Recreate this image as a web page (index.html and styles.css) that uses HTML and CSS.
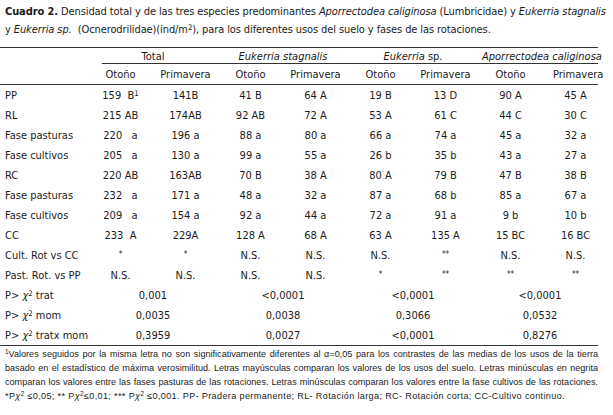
FILE: index.html
```html
<!DOCTYPE html>
<html lang="es">
<head>
<meta charset="utf-8">
<title>Cuadro 2</title>
<link rel="stylesheet" href="styles.css">
</head>
<body>
<div class="page">
  <p class="title">
    <span class="line full"><b>Cuadro 2.</b> Densidad total y de las tres especies predominantes <i>Aporrectodea caliginosa</i> (Lumbricidae) y <i>Eukerria stagnalis</i></span>
    <span class="line">y <i>Eukerria sp.</i>&nbsp; (Ocnerodrilidae)(ind/m<sup>2</sup>), para los diferentes usos del suelo y fases de las rotaciones.</span>
  </p>
  <div class="tbl">
    <div class="row grp">
      <span></span>
      <span class="span2">Total</span>
      <span class="span2 sh"><i>Eukerria stagnalis</i></span>
      <span class="span2"><i>Eukerria</i> sp.</span>
      <span class="span2 ap"><i>Aporrectodea caliginosa</i></span>
    </div>
    <div class="row sub">
      <span></span><span>Otoño</span><span>Primavera</span><span>Otoño</span><span>Primavera</span><span>Otoño</span><span>Primavera</span><span>Otoño</span><span>Primavera</span>
    </div>
    <div class="row"><span>PP</span><span>159&nbsp; B<sup>1</sup></span><span>141B</span><span>41 B</span><span>64 A</span><span>19 B</span><span>13 D</span><span>90 A</span><span>45 A</span></div>
    <div class="row"><span>RL</span><span>215 AB</span><span>174AB</span><span>92 AB</span><span>72 A</span><span>53 A</span><span>61 C</span><span>44 C</span><span>30 C</span></div>
    <div class="row"><span>Fase pasturas</span><span>220 &nbsp; a</span><span>196 a</span><span>88 a</span><span>80 a</span><span>66 a</span><span>74 a</span><span>45 a</span><span>32 a</span></div>
    <div class="row"><span>Fase cultivos</span><span>205 &nbsp; a</span><span>130 a</span><span>99 a</span><span>55 a</span><span>26 b</span><span>35 b</span><span>43 a</span><span>27 a</span></div>
    <div class="row"><span>RC</span><span>220 AB</span><span>163AB</span><span>70 B</span><span>38 A</span><span>80 A</span><span>79 B</span><span>47 B</span><span>38 B</span></div>
    <div class="row"><span>Fase pasturas</span><span>232 &nbsp; a</span><span>171 a</span><span>48 a</span><span>32 a</span><span>87 a</span><span>68 b</span><span>85 a</span><span>67 a</span></div>
    <div class="row"><span>Fase cultivos</span><span>209 &nbsp; a</span><span>154 a</span><span>92 a</span><span>44 a</span><span>72 a</span><span>91 a</span><span>9 b</span><span>10 b</span></div>
    <div class="row"><span>CC</span><span>233&nbsp; A</span><span>229A</span><span>128 A</span><span>68 A</span><span>63 A</span><span>135 A</span><span>15 BC</span><span>16 BC</span></div>
    <div class="row"><span>Cult. Rot vs CC</span><span class="ast">*</span><span class="ast">*</span><span>N.S.</span><span>N.S.</span><span>N.S.</span><span class="ast">**</span><span>N.S.</span><span>N.S.</span></div>
    <div class="row"><span>Past. Rot. vs PP</span><span>N.S.</span><span>N.S.</span><span>N.S.</span><span>N.S.</span><span class="ast">*</span><span class="ast">**</span><span class="ast">**</span><span class="ast">**</span></div>
    <div class="row"><span>P&gt; <i>χ</i><sup>2</sup> trat</span><span class="span2">0,001</span><span class="span2">&lt;0,0001</span><span class="span2">&lt;0,0001</span><span class="span2">&lt;0,0001</span></div>
    <div class="row"><span>P&gt; <i>χ</i><sup>2</sup> mom</span><span class="span2">0,0035</span><span class="span2">0,0038</span><span class="span2">0,3066</span><span class="span2">0,0532</span></div>
    <div class="row"><span>P&gt; <i>χ</i><sup>2</sup> tratx mom</span><span class="span2">0,3959</span><span class="span2">0,0027</span><span class="span2">&lt;0,0001</span><span class="span2">0,8276</span></div>
  </div>
  <p class="notes">
    <span class="line full"><sup>1</sup>Valores seguidos por la misma letra no son significativamente diferentes al α=0,05 para los contrastes de las medias de los usos de la tierra</span>
    <span class="line full">basado en el estadístico de máxima verosimilitud. Letras mayúsculas comparan los valores de los usos del suelo. Letras minúsculas en negrita</span>
    <span class="line full">comparan los valores entre las fases pasturas de las rotaciones. Letras minúsculas comparan los valores entre la fase cultivos de las rotaciones.</span>
    <span class="line last">*P<i>χ</i><sup>2</sup> ≤0,05; ** P<i>χ</i><sup>2</sup>≤0,01; *** P<i>χ</i><sup>2</sup> ≤0,001. PP- Pradera permanente; RL- Rotación larga; RC- Rotación corta; CC-Cultivo continuo.</span>
  </p>
</div>
</body>
</html>
```

FILE: styles.css
```css
html, body {
  margin: 0;
  padding: 0;
  background: #ffffff;
}

body {
  font-family: "DejaVu Sans Condensed", "Liberation Sans Narrow", "Liberation Sans", sans-serif;
  color: #1b1b1b;
}

.page {
  width: 598px;
}

.line {
  display: block;
  white-space: nowrap;
}

.line.full {
  text-align: justify;
  text-align-last: justify;
}

sup {
  font-size: 0.7em;
  line-height: 0;
  vertical-align: 0.45em;
}

.title {
  margin: 0 0 8px 0;
  padding: 3px 0 0 5px;
  width: 593px;
  font-size: 11px;
  letter-spacing: -0.1px;
  line-height: 18px;
}

.title b {
  font-weight: bold;
}

.tbl {
  border-top: 1px solid #333333;
  border-bottom: 1px solid #333333;
  font-size: 11px;
}

.row {
  display: grid;
  grid-template-columns: 88px repeat(7, 65px) 55px;
  height: 20px;
  align-items: center;
  text-align: center;
  white-space: nowrap;
}

.row > span:first-child {
  text-align: left;
  padding-left: 5px;
}

.row > span:last-child {
  padding-left: 10px;
}

.row > .span2 {
  grid-column: span 2;
}

.row > .span2:last-child {
  padding-left: 4px;
}

.grp {
  height: 16px;
  background: linear-gradient(#333333, #333333) no-repeat 102px 100% / 496px 1px;
}

.grp > .ap {
  padding-left: 6px;
}

.sub {
  height: 20px;
  border-bottom: 1px solid #333333;
}

.ast {
  font-size: 8px;
  align-self: start;
  padding-top: 5px;
}

.notes {
  margin: 1px 0 0 0;
  padding-left: 5px;
  width: 593px;
  font-family: "Liberation Sans", Arial, sans-serif;
  font-size: 9.1px;
  line-height: 14px;
}

.notes .last {
  letter-spacing: 0.35px;
}
```
